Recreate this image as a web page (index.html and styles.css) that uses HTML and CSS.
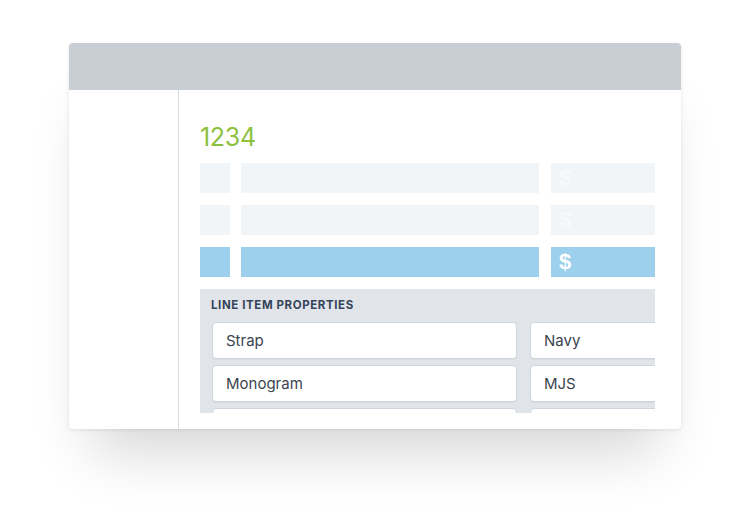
FILE: index.html
```html
<!DOCTYPE html>
<html>
<head>
<meta charset="utf-8">
<link rel="stylesheet" href="styles.css">
</head>
<body>
<div class="card">
  <div class="card-header"></div>
  <div class="card-body">
    <div class="sidebar"></div>
    <div class="main">
      <div class="clip">
        <div class="order-num">1234</div>
        <div class="row light">
          <div class="cell c1"></div>
          <div class="cell c2"></div>
          <div class="cell c3"><span class="dollar">$</span></div>
        </div>
        <div class="row light">
          <div class="cell c1"></div>
          <div class="cell c2"></div>
          <div class="cell c3"><span class="dollar">$</span></div>
        </div>
        <div class="row blue">
          <div class="cell c1"></div>
          <div class="cell c2"></div>
          <div class="cell c3"><span class="dollar">$</span></div>
        </div>
        <div class="props">
          <div class="props-title">LINE ITEM PROPERTIES</div>
          <div class="props-grid">
            <div class="field">Strap</div>
            <div class="field">Navy</div>
            <div class="field">Monogram</div>
            <div class="field">MJS</div>
            <div class="field"></div>
            <div class="field"></div>
          </div>
        </div>
      </div>
    </div>
  </div>
</div>
</body>
</html>
```

FILE: styles.css
```css
* { box-sizing: border-box; }
html, body { margin: 0; padding: 0; background: #ffffff; }
body {
  font-family: "Inter", "Open Sans", "Liberation Sans", sans-serif;
  padding: 43px 0 0 69px;
  height: 518px;
  overflow: hidden;
}
.card {
  width: 612px;
  height: 386px;
  background: #fff;
  border-radius: 4px;
  overflow: hidden;
  box-shadow: 0 1px 4px rgba(0,0,0,0.09), 0 45px 55px -22px rgba(0,0,0,0.16);
  display: flex;
  flex-direction: column;
}
.card-header {
  height: 47px;
  background: #c9ced5;
  flex: none;
}
.card-body {
  flex: 1;
  display: flex;
}
.sidebar {
  width: 110px;
  border-right: 1px solid #d6dbe1;
  flex: none;
}
.main {
  flex: 1;
  padding-left: 21px;
}
.clip {
  width: 455px;
  height: 323px;
  overflow: hidden;
  padding-top: 33px;
}
.order-num {
  color: #8dc03f;
  font-size: 25px;
  line-height: 28px;
  font-weight: 400;
  letter-spacing: -0.3px;
  height: 40px;
}
.row {
  display: flex;
  height: 30px;
  margin-bottom: 12px;
}
.cell { height: 30px; flex: none; }
.c1 { width: 30px; margin-right: 11px; }
.c2 { width: 298px; margin-right: 12px; }
.c3 { width: 104px; display: flex; align-items: center; padding-left: 8px; }
.light .cell { background: #f1f5f8; }
.blue .cell { background: #9dd0ec; }
.dollar {
  font-family: "Liberation Sans", sans-serif;
  font-weight: 700;
  font-size: 22px;
  color: #ffffff;
}
.light .dollar { color: #f7f9fb; }
.props {
  background: #e1e5ea;
  padding: 9px 0 0 12px;
  height: 140px;
}
.props-title {
  font-size: 11.5px;
  font-weight: 700;
  letter-spacing: 0.6px;
  color: #354458;
  line-height: 14px;
  margin-left: -1px;
  margin-bottom: 10px;
}
.props-grid {
  display: grid;
  grid-template-columns: 305px 305px;
  column-gap: 13px;
  row-gap: 6px;
}
.field {
  height: 37px;
  background: #ffffff;
  border: 1px solid #cfd5dc;
  border-radius: 4px;
  box-shadow: 0 1px 0 rgba(0,0,0,0.04);
  font-size: 15px;
  color: #3b4450;
  display: flex;
  align-items: center;
  padding-left: 13px;
}
```
